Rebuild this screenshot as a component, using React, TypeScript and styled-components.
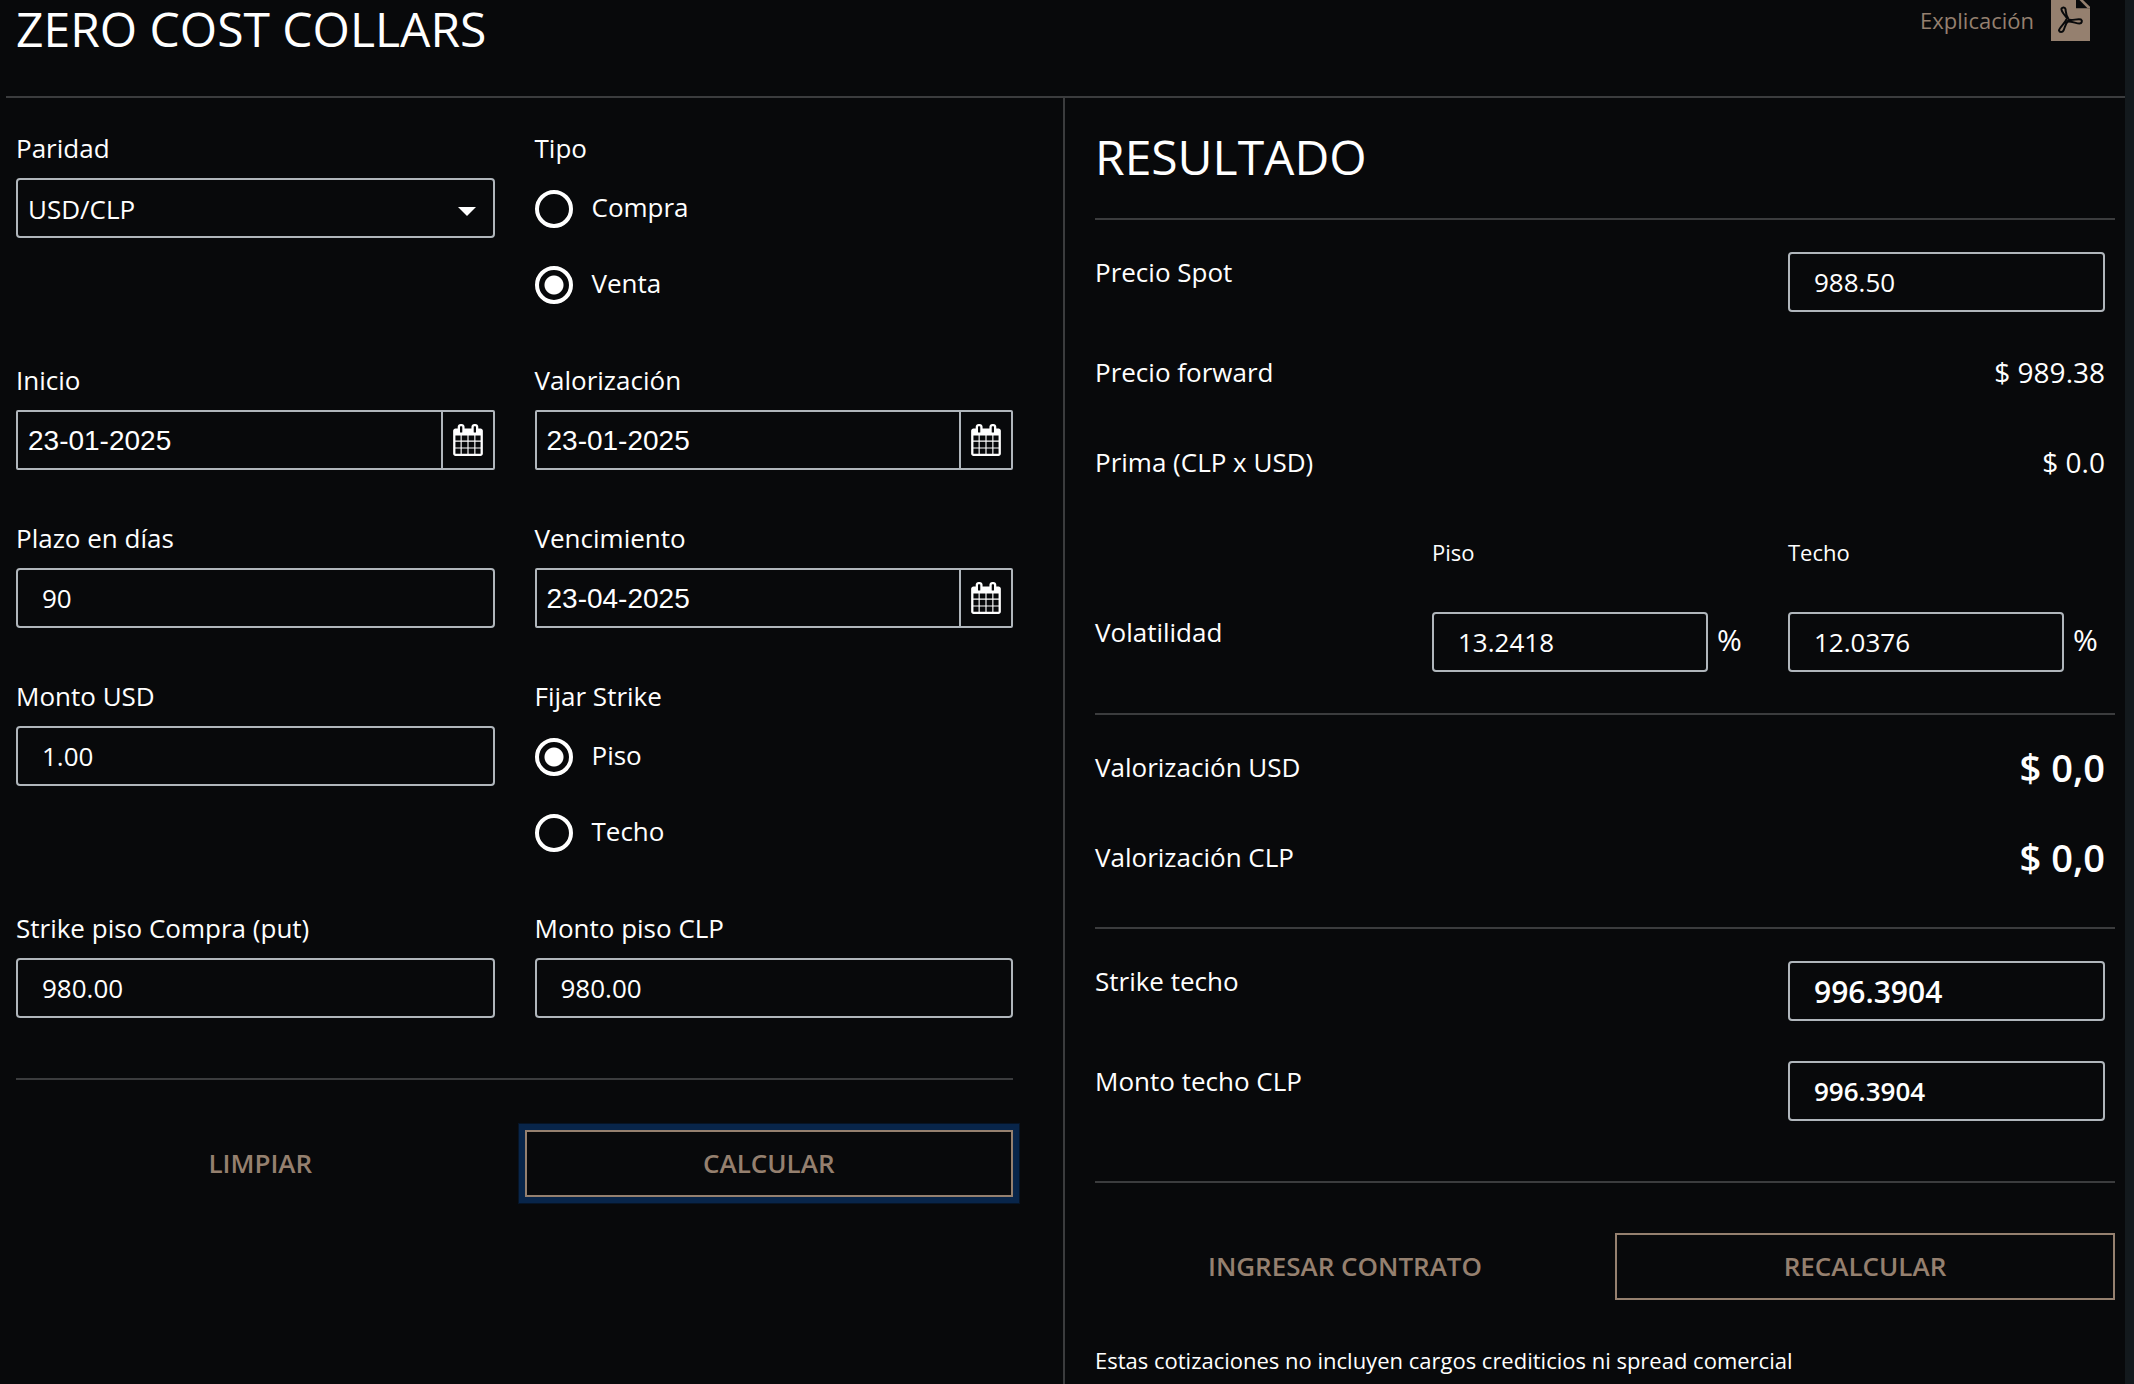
import React, { useId, useState } from "react";
import styled, { createGlobalStyle, css } from "styled-components";

const color = {
  page: "#13191d",
  panel: "#08090b",
  line: "#3b3c3e",
  border: "#b0b6bc",
  accent: "#95806f",
  focus: "#08254a",
  focusEdge: "#061426",
  text: "#ffffff",
};

const GlobalStyle = createGlobalStyle`
  *, *::before, *::after { box-sizing: border-box; }
  body {
    margin: 0;
    background: ${color.page};
    color: ${color.text};
    font-family: "Open Sans", "Noto Sans", sans-serif;
    font-size: 26px;
    line-height: 36px;
  }
`;

const Page = styled.main`
  min-height: 100vh;
  margin-right: 9px;
  padding-left: 6px;
  background: ${color.panel};
`;

const Header = styled.header`
  display: flex;
  justify-content: space-between;
  align-items: flex-start;
  height: 98px;
  padding: 0 35px 0 10px;
  border-bottom: 2px solid ${color.line};
`;

const Title = styled.h1`
  margin: 0;
  font-size: 48px;
  font-weight: 400;
  line-height: 58px;
`;

const ExplainLink = styled.a`
  display: flex;
  align-items: flex-start;
  gap: 17px;
  color: ${color.accent};
  font-size: 22px;
  line-height: 40px;
  text-decoration: none;
`;

const PdfGlyph = styled.svg`
  display: block;
  width: 39px;
  height: 41px;
`;

const Columns = styled.div`
  display: grid;
  grid-template-columns: 1059fr 1060fr;
  min-height: calc(100vh - 98px);
`;

const FormPane = styled.form`
  padding: 32px 50px 0 10px;
  border-right: 2px solid ${color.line};
`;

const FieldGrid = styled.div`
  display: grid;
  grid-template-columns: 1fr 1fr;
  column-gap: 40px;
  row-gap: 50px;
`;

const FieldBox = styled.div`
  min-width: 0;
`;

const labelText = css`
  display: block;
  padding: 0;
  margin: 0 0 12px;
  line-height: 36px;
`;

const Label = styled.label`
  ${labelText}
`;

const RadioSet = styled.fieldset`
  min-width: 0;
  margin: 0;
  padding: 0;
  border: 0;
`;

const Legend = styled.legend`
  ${labelText}
`;

const RadioOptions = styled.div`
  padding-top: 12px;
`;

const frame = css`
  width: 100%;
  height: 60px;
  border: 2px solid ${color.border};
  border-radius: 4px;
  background: transparent;
  color: ${color.text};
  font-family: inherit;
  font-size: 26px;
  outline: none;
`;

const TextInput = styled.input<{ $size?: number; $strong?: boolean }>`
  ${frame}
  padding: 0 24px;
  font-size: ${(p) => p.$size ?? 26}px;
  font-weight: ${(p) => (p.$strong ? 600 : 400)};
`;

const SelectWrap = styled.div`
  position: relative;
`;

const Select = styled.select`
  ${frame}
  padding: 2px 40px 0 10px;
  appearance: none;
`;

const Caret = styled.span`
  position: absolute;
  right: 19px;
  top: 29px;
  border: 9px solid transparent;
  border-top-color: ${color.text};
  border-bottom-width: 0;
  pointer-events: none;
`;

const DateWrap = styled.div`
  ${frame}
  display: flex;
  border-radius: 2px;
`;

const DateInput = styled.input`
  flex: 1;
  min-width: 0;
  padding: 2px 10px 0;
  border: 0;
  background: transparent;
  color: ${color.text};
  font-family: "Liberation Sans", Arial, sans-serif;
  font-size: 28px;
  outline: none;
`;

const DateButton = styled.button`
  display: flex;
  justify-content: center;
  align-items: center;
  width: 52px;
  padding: 0;
  border: 0;
  border-left: 2px solid ${color.border};
  background: transparent;
  color: ${color.text};
`;

const CalendarGlyph = styled.svg`
  width: 30px;
  height: 32px;
  fill: currentColor;
`;

const RadioLabel = styled.label`
  display: flex;
  align-items: flex-start;
  gap: 19px;
  height: 76px;
  line-height: 34px;

  &:last-child {
    height: 46px;
  }
`;

const RadioInput = styled.input`
  appearance: none;
  flex: none;
  width: 38px;
  height: 38px;
  margin: 0;
  border: 4px solid ${color.text};
  border-radius: 50%;

  &:checked {
    background: radial-gradient(circle, ${color.text} 9px, transparent 10px);
  }
`;

const Rule = styled.hr<{ $above: number; $below: number }>`
  height: 2px;
  margin: ${(p) => p.$above}px 0 ${(p) => p.$below}px;
  border: 0;
  background: ${color.line};
`;

const Actions = styled.div`
  display: grid;
  grid-template-columns: 1fr 1fr;
  gap: 20px;
`;

const ActionButton = styled.button<{ $outlined?: boolean; $focused?: boolean }>`
  height: 67px;
  padding: 0 0 2px;
  border: 2px solid ${(p) => (p.$outlined ? color.accent : "transparent")};
  background: transparent;
  color: ${color.accent};
  font-family: inherit;
  font-size: 26px;
  font-weight: 600;
  box-shadow: ${(p) => (p.$focused ? `0 0 0 6px ${color.focus}, 0 0 0 7px ${color.focusEdge}` : "none")};
`;

const ResultPane = styled.section`
  padding: 30px 10px 0 30px;
`;

const ResultTitle = styled.h2`
  margin: 0;
  font-size: 48px;
  font-weight: 400;
  line-height: 58px;
`;

const ResultRow = styled.div<{ $height: number }>`
  display: grid;
  grid-template-columns: 337fr 356fr 317fr;
  align-items: start;
  height: ${(p) => p.$height}px;
  padding-right: 10px;
`;

const RowLabel = styled.label`
  grid-column: 1;
  line-height: 40px;
`;

const WideLabel = styled(RowLabel)`
  grid-column: 1 / 3;
`;

const Amount = styled.output<{ $large?: boolean }>`
  grid-column: 3;
  text-align: right;
  font-size: ${(p) => (p.$large ? 38 : 28)}px;
  font-weight: ${(p) => (p.$large ? 600 : 400)};
  line-height: 40px;
`;

const ColumnHead = styled.span<{ $column: number }>`
  grid-column: ${(p) => p.$column};
  font-size: 22px;
  line-height: 40px;
`;

const PercentField = styled.div`
  display: flex;
  gap: 9px;
  font-size: 30px;
  line-height: 56px;

  input {
    width: 276px;
  }
`;

const Note = styled.p`
  margin: 44px 0 0;
  font-size: 22px;
  line-height: 32px;
`;

const CalendarIcon = () => (
  <CalendarGlyph viewBox="0 0 1664 1792" aria-hidden="true">
    <path d="M128 1664h288v-288h-288v288zM480 1664h320v-288h-320v288zM128 1312h288v-320h-288v320zM480 1312h320v-320h-320v320zM128 928h288v-288h-288v288zM864 1664h320v-288h-320v288zM480 928h320v-288h-320v288zM1248 1664h288v-288h-288v288zM864 1312h320v-320h-320v320zM512 448v-288q0-13-9.500-22.500t-22.500-9.500h-64q-13 0-22.500 9.500t-9.500 22.500v288q0 13 9.500 22.500t22.500 9.500h64q13 0 22.500-9.500t9.500-22.500zM1248 1312h288v-320h-288v320zM864 928h320v-288h-320v288zM1248 928h288v-288h-288v288zM1280 448v-288q0-13-9.500-22.500t-22.500-9.500h-64q-13 0-22.500 9.500t-9.500 22.500v288q0 13 9.500 22.500t22.500 9.500h64q13 0 22.500-9.500t9.500-22.500zM1664 384v1280q0 52-38 90t-90 38h-1408q-52 0-90-38t-38-90v-1280q0-52 38-90t90-38h128v-96q0-66 47-113t113-47h64q66 0 113 47t47 113v96h384v-96q0-66 47-113t113-47h64q66 0 113 47t47 113v96h128q52 0 90 38t38 90z" />
  </CalendarGlyph>
);

const PdfIcon = () => (
  <PdfGlyph viewBox="0 0 39 41" aria-hidden="true">
    <path d="M0 0H25V8.300H39V41H0z" fill={color.accent} />
    <path d="M28.500 0H32L39 6.700V8.300H36.500z" fill={color.accent} />
    <g fill="none" stroke={color.panel} strokeWidth="2" strokeLinejoin="round">
      <path d="M16.500 19C13.500 14.500 9.500 11 10.500 8.500C11.500 7 14 7 14.500 9C15 12 14.500 15 17.500 19" />
      <path d="M17 19.500C21 21 26 18.500 30 19.500C31.500 20.500 31 23.500 28.500 23.500C25 23.500 21 21 16 21.500" />
      <path d="M15.500 19C14.500 23 8 27.500 8 30.500C8.500 32.500 11.500 32.500 12.500 30.500C14 27.500 14 24 17.500 20.500" />
    </g>
  </PdfGlyph>
);

const TextField = ({ label, initial }: { label: string; initial: string }) => {
  const id = useId();
  const [value, setValue] = useState(initial);
  return (
    <FieldBox>
      <Label htmlFor={id}>{label}</Label>
      <TextInput id={id} value={value} onChange={(e) => setValue(e.target.value)} />
    </FieldBox>
  );
};

const DateField = ({ label, initial }: { label: string; initial: string }) => {
  const id = useId();
  const [value, setValue] = useState(initial);
  return (
    <FieldBox>
      <Label htmlFor={id}>{label}</Label>
      <DateWrap>
        <DateInput id={id} value={value} onChange={(e) => setValue(e.target.value)} />
        <DateButton type="button" aria-label={label}>
          <CalendarIcon />
        </DateButton>
      </DateWrap>
    </FieldBox>
  );
};

const RadioField = ({ legend, options, initial }: { legend: string; options: string[]; initial: string }) => {
  const name = useId();
  const [value, setValue] = useState(initial);
  return (
    <RadioSet>
      <Legend>{legend}</Legend>
      <RadioOptions>
        {options.map((option) => (
          <RadioLabel key={option}>
            <RadioInput type="radio" name={name} checked={value === option} onChange={() => setValue(option)} />
            {option}
          </RadioLabel>
        ))}
      </RadioOptions>
    </RadioSet>
  );
};

const ResultInput = ({
  label,
  initial,
  height,
  size,
  strong,
}: {
  label: string;
  initial: string;
  height: number;
  size?: number;
  strong?: boolean;
}) => {
  const id = useId();
  const [value, setValue] = useState(initial);
  return (
    <ResultRow $height={height}>
      <WideLabel htmlFor={id}>{label}</WideLabel>
      <TextInput id={id} $size={size} $strong={strong} value={value} onChange={(e) => setValue(e.target.value)} />
    </ResultRow>
  );
};

const ResultAmount = ({ label, value, large }: { label: string; value: string; large?: boolean }) => {
  const id = useId();
  return (
    <ResultRow $height={90}>
      <WideLabel htmlFor={id}>{label}</WideLabel>
      <Amount id={id} $large={large}>
        {value}
      </Amount>
    </ResultRow>
  );
};

export default function App() {
  const [floorVol, setFloorVol] = useState("13.2418");
  const [capVol, setCapVol] = useState("12.0376");

  return (
    <>
      <GlobalStyle />
      <Page>
        <Header>
          <Title>ZERO COST COLLARS</Title>
          <ExplainLink href="#explicacion">
            Explicación
            <PdfIcon />
          </ExplainLink>
        </Header>
        <Columns>
          <FormPane onSubmit={(e) => e.preventDefault()}>
            <FieldGrid>
              <FieldBox>
                <Label htmlFor="paridad">Paridad</Label>
                <SelectWrap>
                  <Select id="paridad">
                    <option>USD/CLP</option>
                  </Select>
                  <Caret />
                </SelectWrap>
              </FieldBox>
              <RadioField legend="Tipo" options={["Compra", "Venta"]} initial="Venta" />
              <DateField label="Inicio" initial="23-01-2025" />
              <DateField label="Valorización" initial="23-01-2025" />
              <TextField label="Plazo en días" initial="90" />
              <DateField label="Vencimiento" initial="23-04-2025" />
              <TextField label="Monto USD" initial="1.00" />
              <RadioField legend="Fijar Strike" options={["Piso", "Techo"]} initial="Piso" />
              <TextField label="Strike piso Compra (put)" initial="980.00" />
              <TextField label="Monto piso CLP" initial="980.00" />
            </FieldGrid>
            <Rule $above={60} $below={50} />
            <Actions>
              <ActionButton type="reset">LIMPIAR</ActionButton>
              <ActionButton type="submit" $outlined $focused>
                CALCULAR
              </ActionButton>
            </Actions>
          </FormPane>
          <ResultPane>
            <ResultTitle>RESULTADO</ResultTitle>
            <Rule $above={32} $below={32} />
            <ResultInput label="Precio Spot" initial="988.50" height={100} />
            <ResultAmount label="Precio forward" value="$ 989.38" />
            <ResultAmount label="Prima (CLP x USD)" value="$ 0.0" />
            <ResultRow $height={80}>
              <ColumnHead $column={2}>Piso</ColumnHead>
              <ColumnHead $column={3}>Techo</ColumnHead>
            </ResultRow>
            <ResultRow $height={60}>
              <RowLabel as="span">Volatilidad</RowLabel>
              <PercentField>
                <TextInput aria-label="Volatilidad Piso" value={floorVol} onChange={(e) => setFloorVol(e.target.value)} />
                %
              </PercentField>
              <PercentField>
                <TextInput aria-label="Volatilidad Techo" value={capVol} onChange={(e) => setCapVol(e.target.value)} />
                %
              </PercentField>
            </ResultRow>
            <Rule $above={41} $below={32} />
            <ResultAmount label="Valorización USD" value="$ 0,0" large />
            <ResultAmount label="Valorización CLP" value="$ 0,0" large />
            <Rule $above={0} $below={32} />
            <ResultInput label="Strike techo" initial="996.3904" height={100} size={30} strong />
            <ResultInput label="Monto techo CLP" initial="996.3904" height={60} strong />
            <Rule $above={60} $below={50} />
            <Actions>
              <ActionButton type="button">INGRESAR CONTRATO</ActionButton>
              <ActionButton type="button" $outlined>
                RECALCULAR
              </ActionButton>
            </Actions>
            <Note>Estas cotizaciones no incluyen cargos crediticios ni spread comercial</Note>
          </ResultPane>
        </Columns>
      </Page>
    </>
  );
}
